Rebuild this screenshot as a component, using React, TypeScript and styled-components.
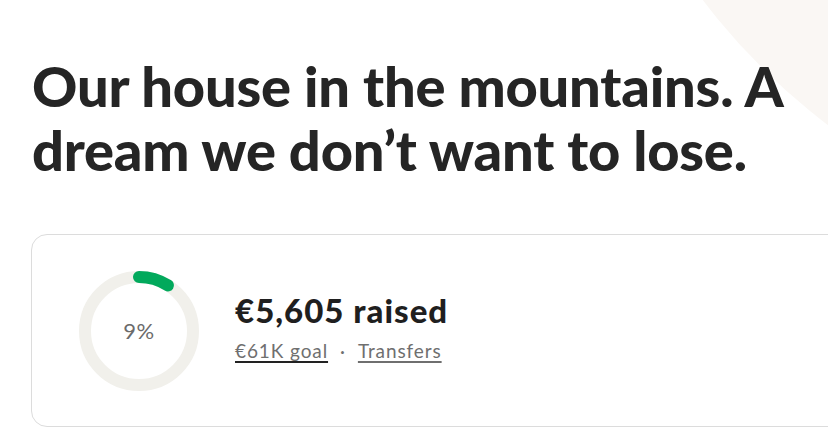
import styled, { createGlobalStyle } from 'styled-components';

const GlobalStyle = createGlobalStyle`
  html, body {
    margin: 0;
    padding: 0;
    background: #ffffff;
    overflow: hidden;
  }
  body {
    font-family: Lato, "Open Sans", sans-serif;
    color: #252525;
  }
`;

const PERCENT = 9;
const RADIUS = 54;
const CIRC = 2 * Math.PI * RADIUS;

const App = () => {
  return (
    <>
      <GlobalStyle />
      <Page>
        <Blob />
        <Title>Our house in the mountains. A dream we don’t want to lose.</Title>
        <Card>
          <Ring>
            <svg width="120" height="120" viewBox="0 0 120 120">
              <circle cx="60" cy="60" r={RADIUS} fill="none" stroke="#f1f0eb" strokeWidth="12" />
              <circle
                cx="60"
                cy="60"
                r={RADIUS}
                fill="none"
                stroke="#02a95c"
                strokeWidth="12"
                strokeLinecap="round"
                strokeDasharray={`${(CIRC * PERCENT) / 100} ${CIRC}`}
                transform="rotate(-90 60 60)"
              />
            </svg>
            <RingLabel>{PERCENT}%</RingLabel>
          </Ring>
          <Summary>
            <Raised>€5,605 raised</Raised>
            <Meta>
              <MetaLink href="#" $dark>€61K goal</MetaLink>
              <Dot>·</Dot>
              <MetaLink href="#">Transfers</MetaLink>
            </Meta>
          </Summary>
        </Card>
      </Page>
    </>
  );
};

export default App;

const Page = styled.main`
  position: relative;
  width: 828px;
  height: 442px;
  padding: 54px 0 0 32px;
  box-sizing: border-box;
  overflow: hidden;
`;

const Blob = styled.div`
  position: absolute;
  left: 569px;
  top: -1053px;
  width: 1312px;
  height: 1312px;
  border-radius: 50%;
  background: #faf7f4;
  z-index: 0;
`;

const Title = styled.h1`
  position: relative;
  z-index: 1;
  margin: 0;
  max-width: 790px;
  font-size: 56px;
  line-height: 64px;
  font-weight: 900;
  letter-spacing: -0.2px;
  color: #252525;
`;

const Card = styled.section`
  position: relative;
  z-index: 1;
  display: flex;
  align-items: center;
  gap: 36px;
  width: 840px;
  height: 193px;
  margin-top: 52px;
  margin-left: -1px;
  padding: 0 0 0 47px;
  box-sizing: border-box;
  border: 1px solid #dcdcdc;
  border-radius: 16px;
  background: #ffffff;
`;

const Ring = styled.div`
  display: grid;
  place-items: center;
  width: 120px;
  height: 120px;

  & > * {
    grid-area: 1 / 1;
  }
`;

const RingLabel = styled.span`
  font-size: 22px;
  letter-spacing: 0.5px;
  color: #6b6b6b;
  font-weight: 400;
`;

const Summary = styled.div`
  display: flex;
  flex-direction: column;
  gap: 9px;
  padding-bottom: 6px;
`;

const Raised = styled.div`
  font-size: 33px;
  line-height: 38px;
  font-weight: 900;
  letter-spacing: 1px;
  color: #1f1f1f;
`;

const Meta = styled.div`
  display: flex;
  align-items: baseline;
  gap: 12px;
  font-size: 19px;
  line-height: 26px;
  letter-spacing: 0.9px;
  color: #6f6f6f;
`;

const MetaLink = styled.a<{ $dark?: boolean }>`
  color: #6f6f6f;
  text-decoration: underline;
  text-decoration-color: ${(p) => (p.$dark ? '#222222' : '#6f6f6f')};
  text-decoration-thickness: 2px;
  text-underline-offset: 3px;
`;

const Dot = styled.span`
  color: #6f6f6f;
`;
